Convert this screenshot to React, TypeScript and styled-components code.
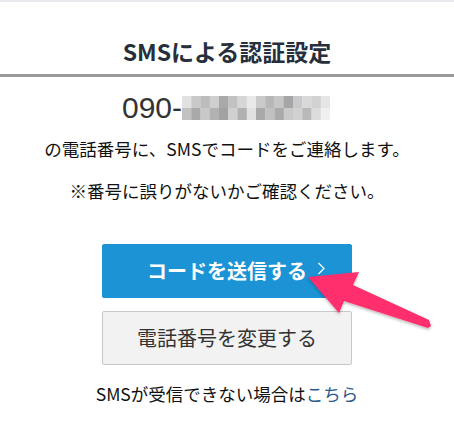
import styled, { createGlobalStyle } from "styled-components";

const GlobalStyle = createGlobalStyle`
    html, body {
        margin: 0;
        padding: 0;
        background: #fff;
    }
    body {
        font-family: "Noto Sans CJK JP", "Noto Sans", sans-serif;
        color: #111;
    }
`;

const Page = styled.div`
    position: relative;
    width: 454px;
    height: 444px;
    box-sizing: border-box;
    border-top: 2px solid #e8e8ed;
    overflow: hidden;
`;

const Header = styled.header`
    height: 75px;
    box-sizing: border-box;
    padding-top: 34px;
    border-bottom: 3px solid #999;
    text-align: center;
`;

const Title = styled.h1`
    margin: 0;
    font-size: 23px;
    line-height: 30px;
    font-weight: 700;
    color: #262f3b;
`;

const Body = styled.main`
    display: flex;
    flex-direction: column;
    align-items: center;
`;

const Phone = styled.div`
    margin-top: 14px;
    height: 34px;
    display: flex;
    align-items: center;
    font-family: "Liberation Sans", Arial, sans-serif;
    font-size: 30px;
    line-height: 34px;
    color: #333;
    padding-right: 2px;
`;

const Mosaic = styled.svg`
    display: block;
`;

const Note = styled.p<{ $gap: number }>`
    margin: ${(p) => p.$gap}px 0 0;
    font-size: 17.5px;
    line-height: 24px;
    color: #111;
`;

const Button = styled.button<{ $primary?: boolean }>`
    position: relative;
    width: 250px;
    height: 54px;
    margin-top: ${(p) => (p.$primary ? "41px" : "13px")};
    box-sizing: border-box;
    border: 1px solid ${(p) => (p.$primary ? "#1b93d5" : "#c8c8c8")};
    border-radius: 2px;
    background: ${(p) => (p.$primary ? "#1b93d5" : "#f2f2f2")};
    color: ${(p) => (p.$primary ? "#fff" : "#333")};
    font-family: "Noto Sans CJK JP", sans-serif;
    font-size: 20px;
    font-weight: ${(p) => (p.$primary ? 700 : 400)};
    line-height: 24px;
    padding: 0;
    cursor: pointer;
`;

const Chevron = styled.svg`
    position: absolute;
    left: 214px;
    top: 17px;
`;

const Footer = styled.p`
    margin: 17px 0 0;
    font-size: 17.5px;
    line-height: 24px;
    color: #111;
`;

const Link = styled.a`
    color: #2b5a8c;
    text-decoration: none;
`;

const Pointer = styled.svg`
    position: absolute;
    left: 0;
    top: 0;
    pointer-events: none;
`;

const rows = [
    ["#e2e2e2", "#c9c9c9", "#bcbcbc", "#cfcfcf", "#a9a9a9", "#c2c2c2", "#d6d6d6", "#e9e9e9", "#cacaca", "#b7b7b7", "#c6c6c6", "#a6a6a6", "#c9c9cd", "#d9d9d9", "#d2d2d2", "#e6e6e6"],
    ["#c2c2c2", "#a9a9a9", "#c9c9c9", "#b2b2b2", "#a2a2a2", "#d0d0d0", "#b1b1b1", "#e1e1e1", "#a9a9a9", "#c1c1c1", "#aaaaaa", "#cacaca", "#d1d1d1", "#b9b9b9", "#dcdcdc", "#f0f0f0"],
];

function App() {
    return <>
        <GlobalStyle />
        <Page>
            <Header>
                <Title>SMSによる認証設定</Title>
            </Header>
            <Body>
                <Phone>
                    090-
                    <Mosaic width="148" height="24" viewBox="0 0 148 24">
                        {rows.map((row, r) =>
                            row.map((c, i) => <rect key={r + "-" + i} x={i * 9.25} y={r * 12} width="9.5" height="12" fill={c} />)
                        )}
                    </Mosaic>
                </Phone>
                <Note $gap={12}>の電話番号に、SMSでコードをご連絡します。</Note>
                <Note $gap={18}>※番号に誤りがないかご確認ください。</Note>
                <Button $primary>
                    コードを送信する
                    <Chevron width="8" height="13" viewBox="0 0 8 13">
                        <polyline points="1.5,1 7,6.5 1.5,12" fill="none" stroke="#fff" strokeWidth="1.2" />
                    </Chevron>
                </Button>
                <Button>電話番号を変更する</Button>
                <Footer>SMSが受信できない場合は<Link href="#">こちら</Link></Footer>
            </Body>
            <Pointer width="454" height="444" viewBox="0 0 454 444">
                <defs>
                    <filter id="sh" x="-20%" y="-20%" width="140%" height="140%">
                        <feDropShadow dx="0" dy="1.5" stdDeviation="1.5" floodColor="#000" floodOpacity="0.3" />
                    </filter>
                </defs>
                <polygon
                    points="308,275 359,270 353,283 429,318 431,324 428,326 344,299 339,311"
                    fill="#ff2d6d"
                    filter="url(#sh)"
                />
            </Pointer>
        </Page>
    </>
}
export default App;
